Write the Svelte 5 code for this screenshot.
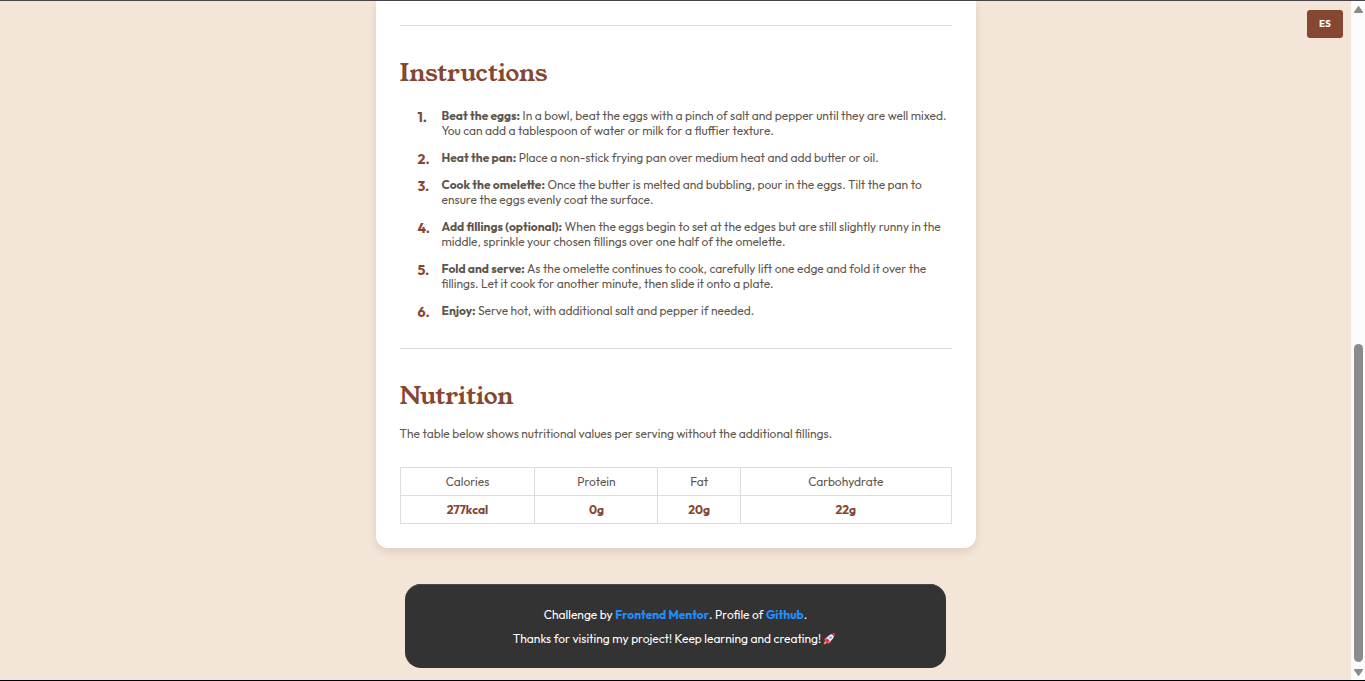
<script>
  const steps = [
    ['Beat the eggs:', 'In a bowl, beat the eggs with a pinch of salt and pepper until they are well mixed. You can add a tablespoon of water or milk for a fluffier texture.'],
    ['Heat the pan:', 'Place a non-stick frying pan over medium heat and add butter or oil.'],
    ['Cook the omelette:', 'Once the butter is melted and bubbling, pour in the eggs. Tilt the pan to ensure the eggs evenly coat the surface.'],
    ['Add fillings (optional):', 'When the eggs begin to set at the edges but are still slightly runny in the middle, sprinkle your chosen fillings over one half of the omelette.'],
    ['Fold and serve:', 'As the omelette continues to cook, carefully lift one edge and fold it over the fillings. Let it cook for another minute, then slide it onto a plate.'],
    ['Enjoy:', 'Serve hot, with additional salt and pepper if needed.']
  ];
  const nutrition = [
    { name: 'Calories', value: '277kcal', width: 24.5 },
    { name: 'Protein', value: '0g', width: 22.3 },
    { name: 'Fat', value: '20g', width: 15 },
    { name: 'Carbohydrate', value: '22g', width: 38.2 }
  ];
</script>

<div class="page">
  <div class="content">
    <button class="lang" type="button">ES</button>
    <main class="card">
      <hr />
      <section>
        <h2>Instructions</h2>
        <ol>
          {#each steps as [title, text], i}
            <li><span class="num">{i + 1}.</span><p><strong>{title}</strong> {text}</p></li>
          {/each}
        </ol>
      </section>
      <hr />
      <section>
        <h2>Nutrition</h2>
        <p class="intro">The table below shows nutritional values per serving without the additional fillings.</p>
        <table>
          <colgroup>
            {#each nutrition as n}<col style="width: {n.width}%" />{/each}
          </colgroup>
          <thead>
            <tr>{#each nutrition as n}<th scope="col">{n.name}</th>{/each}</tr>
          </thead>
          <tbody>
            <tr>{#each nutrition as n}<td>{n.value}</td>{/each}</tr>
          </tbody>
        </table>
      </section>
    </main>
    <footer>
      <p>Challenge by <a href="#mentor">Frontend Mentor</a>. Profile of <a href="#github">Github</a>.</p>
      <p>
        Thanks for visiting my project! Keep learning and creating!<svg class="rocket" viewBox="0 0 24 24" aria-hidden="true">
          <path d="M9 7 L4 9 L1 15 L8 13 Z M17 15 L15 20 L9 23 L11 16 Z" fill="#e3224b" />
          <path d="M5 16 Q2 17 1 23 Q7 22 8 19 Z" fill="#ff9a4a" />
          <path d="M4 15 Q7 8 13 4 Q18 1 23 1 Q23 6 20 11 Q16 17 9 20 Z" fill="#f0edf5" />
          <path d="M17 2 Q20 1 23 1 Q23 4 22 7 Z" fill="#e3224b" />
          <path d="M4 15 L9 11 L13 15 L9 20 Z" fill="#e3224b" />
          <circle cx="15" cy="9" r="2.5" fill="#6ba3d6" />
        </svg>
      </p>
    </footer>
  </div>
  <div class="scroll" aria-hidden="true">
    <svg class="arrow" viewBox="0 0 9 8"><path d="M4.500 0 Q5 0 5.500 1 L9 6 Q9 7 8 7 H1 Q0 7 0 6 L3.500 1 Q4 0 4.500 0Z" /></svg>
    <div class="track"><div class="thumb"></div></div>
    <svg class="arrow" viewBox="0 0 9 8"><path d="M1 0 H8 Q9 0 9 1 L5.500 6 Q4.500 8 3.500 6 L0 1 Q0 0 1 0Z" /></svg>
  </div>
</div>

<style>
  :global(body) { margin: 0; background: #f3e6d8; }
  .page, .page * { box-sizing: border-box; }
  .page {
    display: flex;
    min-height: 100vh;
    border-top: 1px solid #48444a;
    border-bottom: 1px solid #000;
    background: #f3e6d8;
    color: #5f564d;
    font: 12px/15px Outfit, Lato, sans-serif;
  }
  .content {
    position: relative;
    flex: 1;
    display: flex;
    flex-direction: column;
    align-items: center;
    gap: 36px;
    padding-bottom: 12px;
  }
  .lang {
    position: absolute;
    top: 9px;
    right: 8px;
    width: 36px;
    height: 28px;
    padding: 0;
    border: 0;
    border-radius: 3px;
    background: #854632;
    color: #fff;
    font: 700 10px/14px Outfit, Lato, sans-serif;
  }
  .card {
    width: 100%;
    max-width: 600px;
    padding: 24px;
    border-radius: 0 0 12px 12px;
    background: #fff;
    box-shadow: 0 4px 8px rgba(80, 40, 10, 0.12);
  }
  hr { margin: 0; border: 0; border-top: 1px solid #e3ddd7; }
  h2 {
    margin: 0;
    padding-top: 32px;
    color: #854632;
    font: 400 24px/31px "Young Serif", "Liberation Serif", serif;
  }
  p { margin: 0; }
  ol {
    display: flex;
    flex-direction: column;
    gap: 12px;
    margin: 0;
    padding: 19px 0 30px 18px;
    list-style: none;
  }
  li { display: grid; grid-template-columns: 24px 1fr; }
  .num { color: #854632; font-size: 14px; font-weight: 700; line-height: 18px; height: 15px; }
  .intro { padding: 14px 0 26px; }
  table {
    width: 100%;
    table-layout: fixed;
    border-collapse: collapse;
    text-align: center;
  }
  th, td { height: 28px; padding: 0; border: 1px solid #e0dcd7; }
  th { font-weight: 400; }
  td { color: #854632; font-weight: 700; }
  footer {
    width: 40%;
    padding: 19px 16px 17px;
    border-radius: 16px;
    background: #333;
    box-shadow: inset 0 1px 0 #4b4948;
    color: #fff;
    line-height: 24px;
    text-align: center;
  }
  a { color: #1e90ff; font-weight: 700; text-decoration: none; }
  .rocket { width: 12px; height: 12px; margin: 0 3px 0 2px; vertical-align: -2px; }
  .scroll {
    display: flex;
    flex-direction: column;
    align-items: center;
    width: 14px;
    padding: 5px 0 3px;
    background: #fcfcfc;
  }
  .arrow { width: 9px; height: 8px; fill: #8b8b8b; }
  .track { flex: 1; display: flex; flex-direction: column; justify-content: flex-end; padding-bottom: 7px; }
  .thumb { width: 9px; height: 49%; border-radius: 5px; background: #8b8b8b; }
</style>
